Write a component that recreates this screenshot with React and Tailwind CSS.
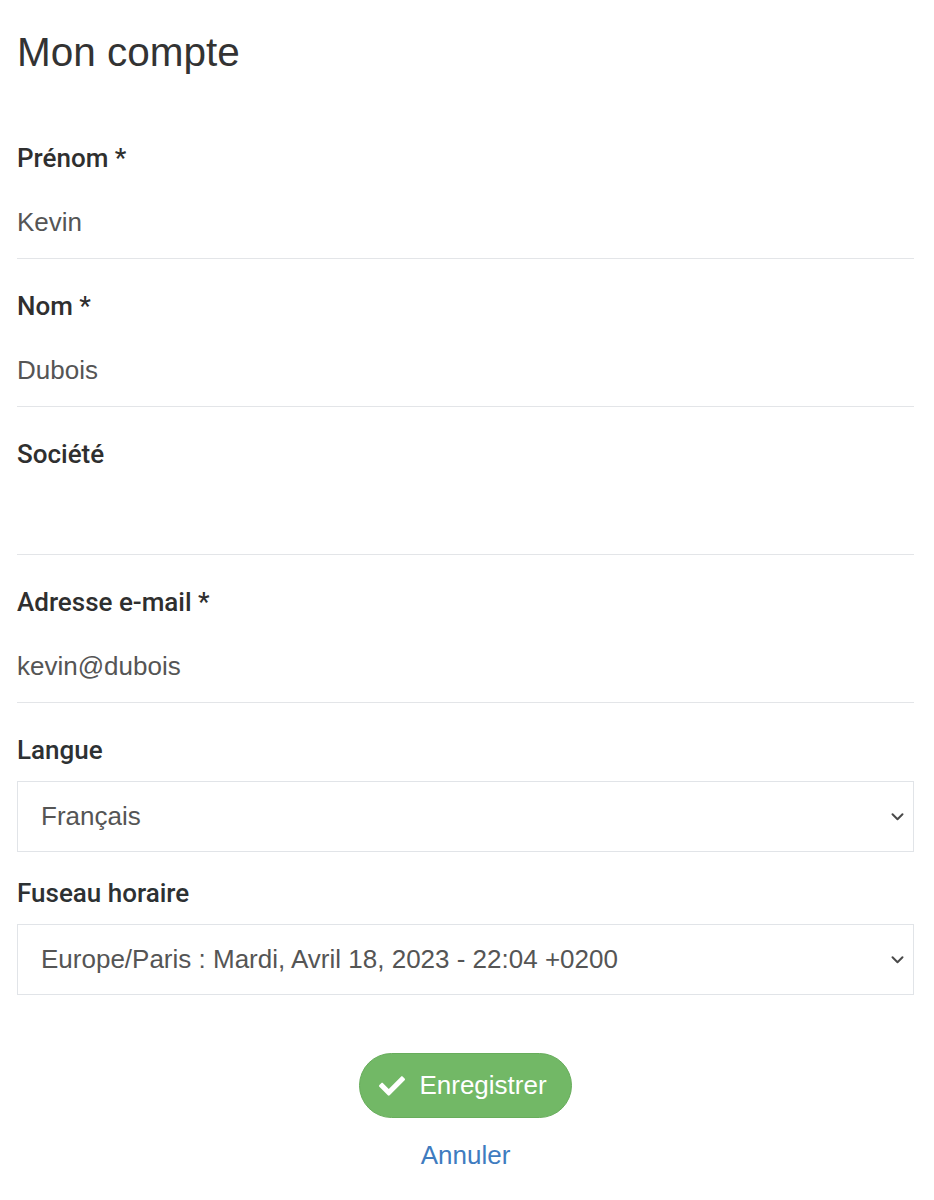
import React, { useState } from 'react';
import { FaCheck } from 'react-icons/fa';

const textFields = [
  { name: 'firstName', label: 'Prénom *', value: 'Kevin' },
  { name: 'lastName', label: 'Nom *', value: 'Dubois' },
  { name: 'company', label: 'Société', value: '' },
  { name: 'email', label: 'Adresse e-mail *', value: 'kevin@dubois' },
];

const labelClass = "text-[26px] leading-[30px] font-medium font-['Roboto',Arial,sans-serif]";

function Chevron() {
  return (
    <svg
      className="pointer-events-none absolute right-[10px] top-1/2 -translate-y-1/2"
      width="13"
      height="9"
      viewBox="0 0 13 9"
      fill="none"
    >
      <path d="M1.5 1.8L6.5 6.8l5-5" stroke="#4a4a4a" strokeWidth="2" strokeLinecap="round" strokeLinejoin="round" />
    </svg>
  );
}

function SelectField({ label, value, options, onChange }) {
  return (
    <div className="flex flex-col">
      <label className={`${labelClass} text-[#2d3133]`}>{label}</label>
      <div className="relative mt-[16px]">
        <select
          value={value}
          onChange={(e) => onChange(e.target.value)}
          className="block w-full h-[71px] appearance-none bg-white border border-[#e1e4e8] pl-[23px] pr-10 text-[26px] text-[#555] outline-none"
        >
          {options.map((o) => (
            <option key={o} value={o}>{o}</option>
          ))}
        </select>
        <Chevron />
      </div>
    </div>
  );
}

export default function App() {
  const [lang, setLang] = useState('Français');
  const [tz, setTz] = useState('Europe/Paris : Mardi, Avril 18, 2023 - 22:04 +0200');

  return (
    <div className="min-h-[1200px] bg-white pl-[17px] pr-[20px] pt-[28px] font-['Liberation_Sans',Arial,sans-serif]">
      <h1 className="text-[40.5px] leading-[48px] text-[#333]">Mon compte</h1>

      <form className="mt-[67px] flex flex-col" onSubmit={(e) => e.preventDefault()}>
        {/* Plain text inputs with a bottom rule */}
        {textFields.map((f) => (
          <div key={f.name} className="flex flex-col mb-[32px]">
            <label className={`${labelClass} text-[#2f2f2f]`}>{f.label}</label>
            <input
              name={f.name}
              defaultValue={f.value}
              className="block w-full h-[86px] pt-[34px] pb-[21px] border-b border-[#e3e5e8] text-[26px] leading-[30px] text-[#555] outline-none bg-transparent"
            />
          </div>
        ))}

        <SelectField
          label="Langue"
          value={lang}
          onChange={setLang}
          options={['Français', 'English', 'Deutsch', 'Español']}
        />
        <div className="mt-[26px]">
          <SelectField
            label="Fuseau horaire"
            value={tz}
            onChange={setTz}
            options={['Europe/Paris : Mardi, Avril 18, 2023 - 22:04 +0200', 'Europe/London : Mardi, Avril 18, 2023 - 21:04 +0100']}
          />
        </div>

        {/* Actions */}
        <div className="mt-[58px] flex flex-col items-center">
          <button
            type="submit"
            className="flex items-center gap-[14px] h-[65px] pl-[19px] pr-[24px] rounded-full bg-[#72b866] border border-[#68ad5c] text-white text-[26px]"
          >
            <FaCheck size={26} />
            <span>Enregistrer</span>
          </button>
          <a href="#" className="mt-[22px] text-[26px] leading-[30px] text-[#3f7cbf]">Annuler</a>
        </div>
      </form>
    </div>
  );
}
